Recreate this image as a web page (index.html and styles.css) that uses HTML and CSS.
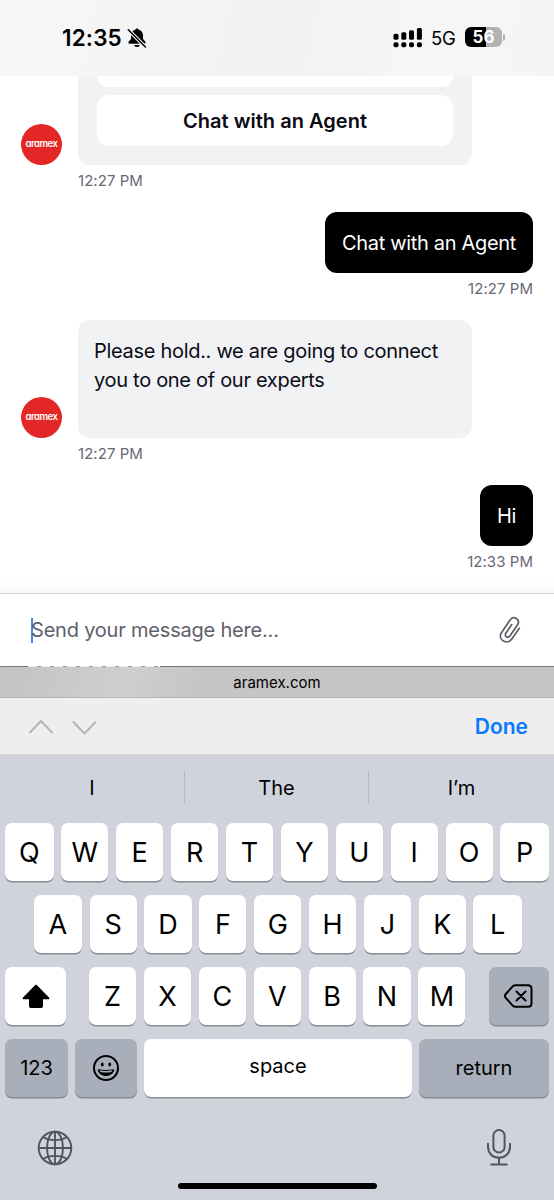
FILE: index.html
```html
<!DOCTYPE html>
<html lang="en">
<head>
<meta charset="utf-8">
<meta name="viewport" content="width=device-width">
<title>Aramex chat</title>
<link rel="stylesheet" href="styles.css">
</head>
<body>
<div class="phone">
  <header class="status">
    <div class="clock"><span>12:35</span>
      <svg width="20" height="20" viewBox="0 0 20 20"><path d="M10 .4c-.9 0-1.600.6-1.700 1.300C5.500 2.400 4 4.700 4 7.400v3.200c0 1.200-2.600 2.600-2.600 4 0 .7.500 1.100 1.200 1.100h14.800c.7 0 1.200-.4 1.200-1.100 0-1.400-2.600-2.800-2.600-4V7.400c0-2.700-1.500-5-4.300-5.700C11.600 1 10.900.4 10 .4zM7.200 16.900h5.600c-.2 1.400-1.400 2.200-2.800 2.200s-2.600-.8-2.800-2.200z"/><path d="M1.300 1.700L18.400 19" stroke="#f4f4f5" stroke-width="3.600"/><path d="M1.300 1.700L18.400 19" stroke="#000" stroke-width="1.500" stroke-linecap="round"/></svg>
    </div>
    <div class="signals">
      <svg width="30" height="21" viewBox="0 0 30 21"><rect x=".5" y="5.700" width="5" height="6" rx="1.500"/><rect x="8.300" y="4.200" width="5" height="7.500" rx="1.500"/><rect x="16" y="2.200" width="5" height="9.500" rx="1.500"/><rect x="23.900" y="0" width="5" height="11.700" rx="1.500"/><rect x=".5" y="14.200" width="5" height="5" rx="1.800"/><rect x="8.300" y="14.200" width="5" height="5" rx="1.800"/><rect x="16" y="14.200" width="5" height="5" rx="1.800"/><rect x="23.900" y="14.200" width="5" height="5" rx="1.800"/></svg>
      <span class="network">5G</span>
      <div class="battery"><span>56</span></div>
      <i class="battery-tip"></i>
    </div>
  </header>

  <main class="chat">
    <section class="incoming first">
      <div class="avatar"><span>aramex</span></div>
      <div class="message">
        <div class="options"><div class="option cut"></div><div class="option">Chat with an Agent</div></div>
        <time>12:27 PM</time>
      </div>
    </section>
    <section class="outgoing"><div class="reply">Chat with an Agent</div><time>12:27 PM</time></section>
    <section class="incoming second">
      <div class="avatar"><span>aramex</span></div>
      <div class="message">
        <div class="bubble">Please hold.. we are going to connect<br>you to one of our experts</div>
        <time>12:27 PM</time>
      </div>
    </section>
    <section class="outgoing"><div class="reply short">Hi</div><time>12:33 PM</time></section>
  </main>

  <div class="composer">
    <i class="caret"></i><span>Send your message here...</span>
    <svg width="24" height="28" viewBox="0 0 24 28" fill="none" stroke="#5d5d68" stroke-width="1.700" stroke-linecap="round" stroke-linejoin="round"><path d="M21.300 12.300L13.800 23.100C9.600 29.200-.6 24.300 3.300 16.900L12 4c3.400-4.900 10.700-.8 7.700 4.500l-7.600 11.300c-2.200 3-6.200.6-4.300-2.500l6-8.700"/></svg>
  </div>

  <div class="address"><i class="remnant"></i><span>aramex.com</span></div>
  <div class="toolbar">
    <svg width="70" height="18" viewBox="0 0 70 18" fill="none" stroke="#b5b5b7" stroke-width="2" stroke-linecap="round" stroke-linejoin="round"><path d="M2 14.500L13 3l11 11.500M45.500 4l11 11.500L67.500 4"/></svg>
    <b>Done</b>
  </div>

  <div class="keyboard">
    <div class="suggestions"><span>I</span><span>The</span><span>I’m</span></div>
    <div class="row top"><kbd>Q</kbd><kbd>W</kbd><kbd>E</kbd><kbd>R</kbd><kbd>T</kbd><kbd>Y</kbd><kbd>U</kbd><kbd>I</kbd><kbd>O</kbd><kbd>P</kbd></div>
    <div class="row middle"><kbd>A</kbd><kbd>S</kbd><kbd>D</kbd><kbd>F</kbd><kbd>G</kbd><kbd>H</kbd><kbd>J</kbd><kbd>K</kbd><kbd>L</kbd></div>
    <div class="row lower">
      <kbd class="shift"><svg width="28" height="25" viewBox="0 0 28 25"><path d="M13 1.300c.6-.6 1.400-.6 2 0l12 12.200c.8.900.4 1.800-.7 1.800H21v6.400c0 1.600-.8 2.300-2.300 2.300h-9.400C7.800 24 7 23.300 7 21.700v-6.400H1.700c-1.100 0-1.500-.9-.7-1.800z"/></svg></kbd>
      <div class="letters"><kbd>Z</kbd><kbd>X</kbd><kbd>C</kbd><kbd>V</kbd><kbd>B</kbd><kbd>N</kbd><kbd>M</kbd></div>
      <kbd class="delete dark"><svg width="29" height="24" viewBox="0 0 29 24" fill="none" stroke="#000" stroke-width="2" stroke-linecap="round" stroke-linejoin="round"><path d="M11.300 1.200H24c2.300 0 3.500 1.200 3.500 3.500v14.600c0 2.300-1.200 3.500-3.500 3.500H11.300c-1 0-1.700-.3-2.400-1L2 14.200c-1.300-1.400-1.300-3 0-4.400l6.900-7.600c.7-.7 1.400-1 2.400-1zM12.500 7.500l9 9M21.500 7.500l-9 9"/></svg></kbd>
    </div>
    <div class="row bottom">
      <kbd class="numbers dark">123</kbd>
      <kbd class="emoji dark"><svg width="28" height="28" viewBox="0 0 28 28"><circle cx="14" cy="14" r="12" fill="none" stroke="#000" stroke-width="2"/><ellipse cx="10.300" cy="10.500" rx="1.400" ry="2"/><ellipse cx="17.700" cy="10.500" rx="1.400" ry="2"/><path d="M6.300 15.200c4.800 1.100 10.600 1.100 15.400 0 .4 0 .7.200.6.700-.7 3.400-4.200 6-8.300 6s-7.600-2.600-8.300-6c-.1-.5.200-.7.600-.7z"/><path d="M7.600 16.300c4.200.9 8.600.9 12.800 0-.4 1.100-.7 1.400-1.400 1.600-3.200.8-6.800.8-10 0-.7-.2-1-.5-1.400-1.600z" fill="#a8afba"/></svg></kbd>
      <kbd class="space">space</kbd>
      <kbd class="return dark">return</kbd>
    </div>
    <div class="extras">
      <svg width="36" height="36" viewBox="0 0 36 36" fill="none" stroke="#51555d" stroke-width="1.900"><circle cx="18" cy="18" r="16.300"/><ellipse cx="18" cy="18" rx="8" ry="16.300"/><path d="M18 1.700v32.600M1.700 18h32.600M6 7c6.500 4.200 17.500 4.200 24 0M6 29c6.500-4.200 17.500-4.200 24 0"/></svg>
      <svg width="26" height="38" viewBox="0 0 26 38" fill="none" stroke="#51555d" stroke-width="2" stroke-linecap="round"><rect x="7.400" y="1" width="11.200" height="22.500" rx="5.600"/><path d="M2 14.700v3c0 6.600 4.800 11 11 11s11-4.400 11-11v-3M13 29v6.300M5.200 35.500h15.600"/></svg>
    </div>
    <div class="home"></div>
  </div>
</div>
</body>
</html>
```
FILE: styles.css
```css
* { box-sizing: border-box; }
body { margin: 0; background: #fff; color: #000; font-family: Inter, "Liberation Sans", sans-serif; }
svg { display: block; flex: none; }
.phone { width: 554px; height: 1200px; display: flex; flex-direction: column; overflow: hidden; }

.status { height: 76px; flex: none; display: flex; justify-content: space-between; padding: 26px 49px 0 62px; background: linear-gradient(100deg, #f7f7f7, #f2f2f4 50%, #f6f6f7 75%, #f5f5f6); }
.clock { display: flex; height: 24px; align-items: center; gap: 4px; font-size: 22.500px; font-weight: 600; line-height: 24px; }
.clock span { width: 61px; letter-spacing: .15px; white-space: nowrap; }
.signals { display: flex; align-items: center; height: 24px; }
.network { width: 25px; margin: 0 9px 0 8px; font-size: 18.500px; line-height: 24px; letter-spacing: -.3px; }
.battery { width: 37px; height: 20px; margin-top: -2px; border-radius: 6px; background: linear-gradient(90deg, #000 56%, #b2b2b3 56%); color: #fff; font-size: 17px; font-weight: 700; line-height: 20px; text-align: center; }
.battery-tip { width: 2px; height: 7px; margin: -2px 0 0 1px; border-radius: 0 3px 3px 0; background: #b2b2b3; }

.chat { height: 517px; flex: none; display: flex; flex-direction: column; padding: 0 21px; background: linear-gradient(#fff calc(100% - 14px), #f8f8f8); }
time { display: block; height: 16px; margin-top: 8px; color: #696974; font-size: 15px; line-height: 16px; letter-spacing: .05px; white-space: nowrap; }
.incoming { display: flex; align-items: flex-end; gap: 16px; }
.avatar { width: 41px; height: 41px; flex: none; display: grid; place-items: center; margin-bottom: 24px; border-radius: 50%; background: #e32626; color: #fff; }
.avatar span { height: 14px; font-size: 9.500px; font-weight: 600; line-height: 11px; letter-spacing: -.45px; font-feature-settings: "cv11"; }
.message { width: 394px; }
.options { height: 89px; padding: 0 19px; border-radius: 0 0 12px 12px; background: #f1f2f4; }
.option { height: 51px; border-radius: 12px; background: #fff; color: #0b0b15; font-size: 20px; font-weight: 600; line-height: 53px; letter-spacing: .03px; text-align: center; }
.option.cut { height: 11px; margin-bottom: 8px; border-radius: 0 0 12px 12px; }
.outgoing { display: flex; flex-direction: column; align-items: flex-end; margin-top: 23px; }
.reply { width: 208px; height: 61px; border-radius: 12px; background: #000; color: #fff; font-size: 20px; line-height: 63px; letter-spacing: -.32px; text-align: center; white-space: nowrap; }
.reply.short { width: 53px; }
.second { margin-top: 23px; }
.bubble { height: 118px; padding: 17px 16px; border-radius: 12px; background: #f1f2f4; color: #0b0b15; font-size: 20px; line-height: 28.500px; letter-spacing: -.3px; white-space: nowrap; }

.composer { height: 73px; flex: none; display: flex; align-items: center; padding: 0 32px 0 31px; border-top: 1px solid #d5d5d5; color: #60606b; font-size: 20px; line-height: 28px; letter-spacing: -.2px; }
.composer .caret { width: 2px; height: 25px; margin-right: -2px; background: #438bef; }
.composer span { flex: 1; }
.address { position: relative; height: 32px; flex: none; border-top: 1px solid #777; border-bottom: 1px solid #b5b5b5; background: linear-gradient(105deg, #c4c3c3, #d0cecf 23%, #c5c5c5 37%, #c5c5c5); text-align: center; font-size: 15px; line-height: 31px; }
.remnant { position: absolute; top: -1px; left: 28px; width: 132px; height: 1px; background: repeating-linear-gradient(90deg, #eee 0 9px, #999 9px 13px); }
.toolbar { height: 57px; flex: none; display: flex; align-items: center; justify-content: space-between; padding: 1px 26px 0 28px; border-bottom: 1px solid #d8d8da; background: #eee; color: #087aff; font-size: 21px; line-height: 28px; }
.toolbar b { padding-top: 1px; font-weight: 600; }

.keyboard { flex: 1; display: flex; flex-direction: column; padding: 0 5px; background: #d0d3db; }
.suggestions { height: 68px; flex: none; display: grid; grid-template-columns: 184px 184px 1fr; margin: 0 -5px; padding-top: 16px; }
.suggestions span { height: 33px; line-height: 34px; text-align: center; font-size: 20px; }
.suggestions span + span { border-left: 1px solid #b8bbc3; }
.row { height: 58px; flex: none; display: flex; justify-content: space-between; margin-bottom: 14px; }
kbd { width: 47.200px; height: 58px; display: grid; place-items: center; border-radius: 7px; background: #fff; box-shadow: 0 1.500px 0 #898b90; font: 27px/59px Inter, "Liberation Sans", sans-serif; }
.top kbd:first-child, .top kbd:last-child, .middle kbd:first-child, .middle kbd:last-child { width: 48.500px; }
.row.middle { padding: 0 27px 0 28.500px; }
.letters { width: 376.500px; display: flex; justify-content: space-between; }
kbd.shift { width: 61px; }
kbd.delete { width: 60.500px; }
kbd.dark { background: #a8afba; }
.bottom { justify-content: flex-start; gap: 7px; margin-bottom: 0; }
.bottom kbd { font-size: 20px; line-height: 58px; }
kbd.numbers { width: 63px; }
kbd.emoji { width: 62px; }
.bottom kbd.space { width: 268px; line-height: 55px; align-items: start; }
kbd.return { width: 130px; }
.extras { height: 86px; flex: none; display: flex; align-items: center; justify-content: space-between; padding: 16px 37px 0 37px; }
.extras svg:first-child { margin-left: -5px; }
.home { width: 199px; height: 6px; margin: 0 auto; border-radius: 3px; background: #000; }
```
